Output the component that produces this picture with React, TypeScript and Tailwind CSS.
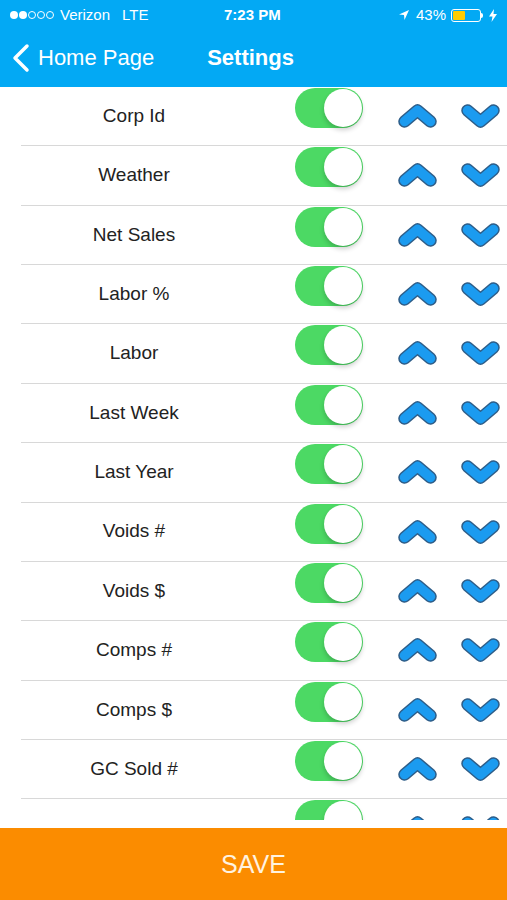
import { useState } from "react";

const ITEMS = [
  "Corp Id",
  "Weather",
  "Net Sales",
  "Labor %",
  "Labor",
  "Last Week",
  "Last Year",
  "Voids #",
  "Voids $",
  "Comps #",
  "Comps $",
  "GC Sold #",
  "GC Sold $",
];

function Arrow({ up }: { up: boolean }) {
  const pts = up ? "6.5,17.5 19.5,6.5 32.5,17.5" : "6.5,6.5 19.5,17.5 32.5,6.5";
  return (
    <svg width="39" height="24" viewBox="0 0 39 24">
      <polyline points={pts} fill="none" stroke="#2e5d88" strokeWidth="12.5" strokeLinecap="round" strokeLinejoin="round" />
      <polyline points={pts} fill="none" stroke="#1b9bf0" strokeWidth="9.5" strokeLinecap="round" strokeLinejoin="round" />
    </svg>
  );
}

function Toggle({ on, onClick }: { on: boolean; onClick: () => void }) {
  return (
    <button onClick={onClick}
      className={`w-[68px] h-[40px] rounded-full flex items-center p-[1px] ${on ? "bg-[#4cd964] justify-end" : "bg-[#e5e5e5] justify-start"}`}>
      <span className="w-[38px] h-[38px] rounded-full bg-white shadow-[0_3px_5px_rgba(0,0,0,0.2)]" />
    </button>
  );
}

export default function App() {
  const [state, setState] = useState<boolean[]>(ITEMS.map(() => true));

  return (
    <div className="w-[507px] h-[900px] flex flex-col bg-white overflow-hidden" style={{ fontFamily: '"Liberation Sans", Arial, sans-serif' }}>
      {/* Header */}
      <div className="bg-[#03a9f4] h-[87px] flex flex-col text-white">
        {/* status bar */}
        <div className="h-[30px] flex items-center px-[10px] text-[15px] relative">
          <div className="flex items-center gap-[1px]">
            <span className="w-[8px] h-[8px] rounded-full bg-white" />
            <span className="w-[8px] h-[8px] rounded-full bg-white" />
            <span className="w-[8px] h-[8px] rounded-full border border-white" />
            <span className="w-[8px] h-[8px] rounded-full border border-white" />
            <span className="w-[8px] h-[8px] rounded-full border border-white" />
          </div>
          <span className="ml-[6px]">Verizon</span>
          <span className="ml-[12px]">LTE</span>
          <span className="absolute left-[224px] font-semibold">7:23 PM</span>
          <div className="ml-auto flex items-center">
            <svg width="12" height="12" viewBox="0 0 12 12" className="mr-[6px]">
              <path d="M11 1 L1 5.5 L6 6 L6.5 11 Z" fill="white" />
            </svg>
            <span>43%</span>
            <div className="ml-[5px] w-[30px] h-[13px] rounded-[3px] border border-white p-[1px] flex">
              <div className="w-[12px] h-full bg-[#ffcc00] rounded-[1px]" />
            </div>
            <div className="w-[2px] h-[5px] bg-white rounded-r-sm" />
            <svg width="8" height="13" viewBox="0 0 8 13" className="ml-[6px]">
              <path d="M5 0 L0 7.5 L3.5 7.5 L2.5 13 L8 5 L4.5 5 Z" fill="white" />
            </svg>
          </div>
        </div>
        {/* nav */}
        <div className="flex-1 flex items-center pl-[12px] pb-[2px]">
          <svg width="18" height="30" viewBox="0 0 18 30">
            <polyline points="15,3 3,15 15,27" fill="none" stroke="white" strokeWidth="3.5" strokeLinecap="round" strokeLinejoin="round" />
          </svg>
          <span className="ml-[8px] text-[22px]">Home Page</span>
          <span className="ml-[53px] text-[22px] font-bold">Settings</span>
        </div>
      </div>

      {/* List */}
      <div className="h-[733px] overflow-hidden">
        {ITEMS.map((label, i) => (
          <div key={label} className="ml-[21px] h-[59.36px] border-b border-[#d8d8d8] flex items-start">
            <div className="w-[226px] h-full flex items-center justify-center text-[19px] text-[#222]">
              {label}
            </div>
            <div className="ml-[48px] pt-[1px]">
              <Toggle on={state[i]} onClick={() => setState(state.map((s, j) => (j === i ? !s : s)))} />
            </div>
            <div className="ml-[35px] mt-[17px]">
              <Arrow up />
            </div>
            <div className="ml-[24px] mt-[17px]">
              <Arrow up={false} />
            </div>
          </div>
        ))}
      </div>

      <div className="h-[8px]" />

      {/* Save */}
      <button className="h-[72px] bg-[#fb8c00] text-[#fff3e0] text-[25px] flex items-center justify-center pt-[1px]">
        SAVE
      </button>
    </div>
  );
}
